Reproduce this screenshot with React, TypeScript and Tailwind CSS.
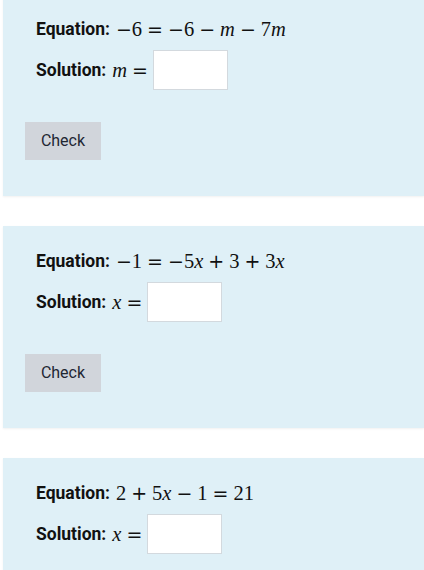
import React from "react";

type Problem = {
  id: number;
  variable: string;
  equation: React.ReactNode;
};

const V = ({ children }: { children: React.ReactNode }) => <i className="italic">{children}</i>;

// math operators get wide glyphs and spacing like KaTeX
const Op = ({ children }: { children: React.ReactNode }) => (
  <span className="px-[5px] font-['DejaVu_Sans',sans-serif] text-[19px]">{children}</span>
);

const Neg = () => <span className="font-['DejaVu_Sans',sans-serif] text-[19px]">−</span>;

const problems: Problem[] = [
  {
    id: 1,
    variable: "m",
    equation: (
      <>
        <Neg />6<Op>=</Op>
        <Neg />6<Op>−</Op>
        <V>m</V>
        <Op>−</Op>7<V>m</V>
      </>
    ),
  },
  {
    id: 2,
    variable: "x",
    equation: (
      <>
        <Neg />1<Op>=</Op>
        <Neg />5<V>x</V>
        <Op>+</Op>3<Op>+</Op>3<V>x</V>
      </>
    ),
  },
  {
    id: 3,
    variable: "x",
    equation: (
      <>
        2<Op>+</Op>5<V>x</V>
        <Op>−</Op>1<Op>=</Op>21
      </>
    ),
  },
];

function ProblemCard({ problem }: { problem: Problem }) {
  return (
    <div className="bg-[#dff0f7] pl-[22px] pt-[23px] pb-[36px] shadow-[0_1px_2px_rgba(0,0,0,0.06)]">
      <div className="pl-[11px]">
        <p className="flex h-6 items-center text-[17.5px] text-[#111]">
          <span className="font-bold">Equation:</span>
          <span className="ml-[6px] font-['Liberation_Serif',serif] text-[20.5px]">{problem.equation}</span>
        </p>
        <div className="mt-[9px] flex h-10 items-center text-[17.5px] text-[#111]">
          <span className="font-bold">Solution:</span>
          <span className="ml-[6px] font-['Liberation_Serif',serif] text-[20.5px]">
            <V>{problem.variable}</V>
            <Op>=</Op>
          </span>
          <input className="h-10 w-[75px] border border-[#d3d9de] bg-white" />
        </div>
      </div>
      <button
        type="button"
        className="mt-[32px] h-[38px] w-[76px] bg-[#d1d5db] text-[16px] text-[#1f2733]"
      >
        Check
      </button>
    </div>
  );
}

export default function App() {
  return (
    <div className="min-h-screen bg-white font-['Roboto',sans-serif]">
      <div className="mt-[-6px] flex flex-col gap-[30px] pl-[3px]">
        {problems.map((problem) => (
          <ProblemCard key={problem.id} problem={problem} />
        ))}
      </div>
    </div>
  );
}
